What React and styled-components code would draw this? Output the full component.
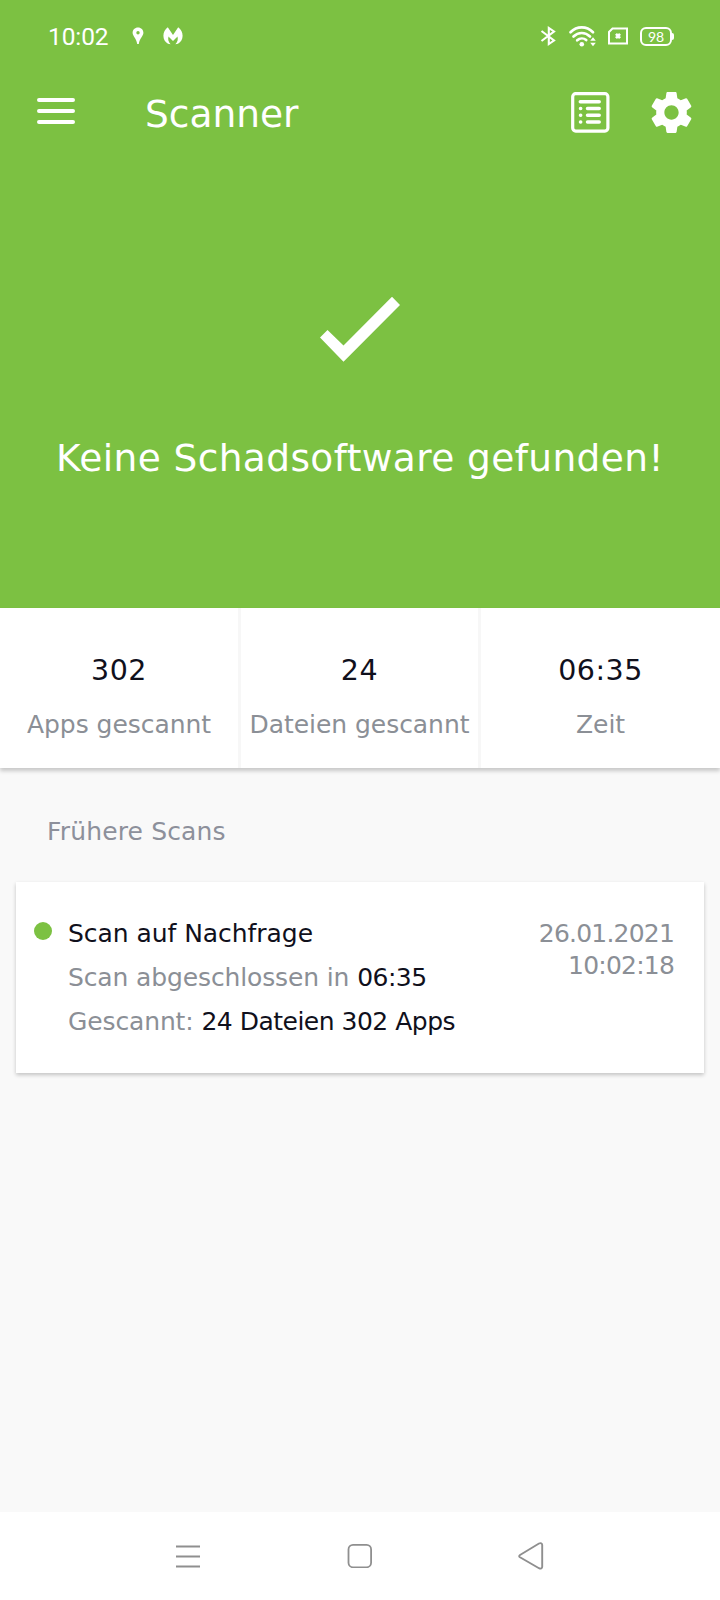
import React from "react";
import styled, { createGlobalStyle } from "styled-components";

const GlobalStyle = createGlobalStyle`
  * { box-sizing: border-box; }
  body { margin: 0; background: #f9f9f9; }
  svg { display: block; flex: none; }
`;

const Screen = styled.div`
  display: flex;
  flex-direction: column;
  width: 720px;
  height: 1600px;
  background: #f9f9f9;
  font-family: "DejaVu Sans", "Noto Sans", sans-serif;
  color: #10101c;
  white-space: nowrap;
`;

const Hero = styled.header`
  height: 608px;
  background: #7cc142;
  color: #fff;
`;

const StatusBar = styled.div`
  display: flex;
  align-items: center;
  height: 72px;
  padding: 0 46px 0 48px;
`;

const Clock = styled.time`
  width: 84px;
  padding-top: 1px;
  font-family: Roboto, sans-serif;
  font-size: 24.5px;
  line-height: 30px;
  letter-spacing: -0.1px;
`;

const StatusIcons = styled.div`
  display: flex;
  align-items: center;
  gap: ${(p) => p.$gap}px;
  margin-left: ${(p) => (p.$end ? "auto" : 0)};
`;

const AppBar = styled.div`
  display: flex;
  align-items: center;
  height: 80px;
  padding: 0 24px 0 36px;
`;

const Title = styled.h1`
  margin: 3px auto 0 69px;
  font-size: 37.5px;
  line-height: 52px;
  font-weight: 400;
`;

const Actions = styled.div`
  display: flex;
  align-items: center;
  gap: 37px;
`;

const Result = styled.div`
  display: flex;
  flex-direction: column;
  align-items: center;
  gap: 66px;
  padding-top: 144px;
`;

const Message = styled.p`
  margin: 0;
  font-size: 37.5px;
  line-height: 60px;
  letter-spacing: 0.4px;
`;

const Stats = styled.section`
  display: grid;
  grid-template-columns: 241px 240px 239px;
  height: 160px;
  background: #fff;
  box-shadow: 0 3px 4px rgba(0, 0, 0, 0.2);
`;

const Stat = styled.div`
  display: flex;
  flex-direction: column;
  align-items: center;
  gap: 18px;
  padding-top: 45px;
  border-right: ${(p) => (p.$last ? "none" : "3px solid #f7f7f7")};
`;

const StatValue = styled.strong`
  font-size: 28.5px;
  line-height: 36px;
  font-weight: 400;
  letter-spacing: 0.5px;
`;

const StatLabel = styled.span`
  font-size: 25px;
  line-height: 36px;
  letter-spacing: -0.05px;
  color: #8b8f96;
`;

const SectionTitle = styled.h2`
  margin: 46px 0 0 47px;
  font-size: 25px;
  line-height: 36px;
  font-weight: 400;
  letter-spacing: 0.15px;
  color: #8d909b;
`;

const ScanCard = styled.article`
  display: flex;
  align-items: flex-start;
  height: 191px;
  margin: 32px 16px 0;
  padding: 29px 30px 0 18px;
  background: #fff;
  box-shadow: 0 2px 4px rgba(0, 0, 0, 0.22);
`;

const Dot = styled.span`
  width: 18px;
  height: 18px;
  margin: 11px 16px 0 0;
  border-radius: 50%;
  background: #7cc142;
`;

const Details = styled.div`
  flex: 1;
  padding-top: 1px;
  font-size: 25px;
  line-height: 44px;
`;

const Line = styled.div`
  color: ${(p) => (p.$strong ? "#10101c" : "#8b8f96")};
  letter-spacing: ${(p) => (p.$strong ? -0.05 : -0.13)}px;
`;

const Value = styled.span`
  color: #10101c;
  letter-spacing: -0.5px;
`;

const Stamp = styled.div`
  padding-top: 7px;
  font-size: 25px;
  line-height: 32px;
  letter-spacing: -0.8px;
  text-align: right;
  color: #8b8f96;
`;

const NavBar = styled.nav`
  display: flex;
  align-items: center;
  justify-content: space-between;
  height: 88px;
  margin-top: auto;
  padding: 0 176px;
  background: #fff;
`;

const PinIcon = () => (
  <svg width="12" height="18" viewBox="0 0 12 18" fill="#fff">
    <path fillRule="evenodd" d="M6 0.4C2.800.4.6 2.800.6 5.800c0 3.200 3.800 5.400 4.600 11.300h1.600C7.600 11.200 11.400 9 11.400 5.800 11.400 2.800 9.200.4 6 .4zM6 4a1.700 1.700 0 1 1 0 3.400A1.700 1.700 0 0 1 6 4z" />
  </svg>
);

const MIcon = () => (
  <svg width="20" height="18" viewBox="0 0 20 18" fill="#fff">
    <path d="M4.800.3 10 8 15.200.3C18 2.300 19.600 5.300 19.600 8.700c0 3.500-1.700 6.300-4.600 8.100l-2.600.4C14.500 15.400 15.300 12.500 14.500 9.600L10 14 5.500 9.600C4.700 12.500 5.500 15.400 7.600 17.200l-2.600-.4C2.100 15 .4 12.200.4 8.700.4 5.300 2 2.300 4.800.3z" />
  </svg>
);

const BluetoothIcon = () => (
  <svg width="16" height="20" viewBox="0 0 16 20" fill="none" stroke="#fff" strokeWidth="2.100">
    <path d="M1.500 5 14 14.500 8.800 18V2l5.200 3.500L1.500 15" />
  </svg>
);

const WifiIcon = () => (
  <svg width="28" height="21" viewBox="-1 0 28 21" fill="none" stroke="#fff">
    <g strokeWidth="2.700" strokeLinecap="round">
      <path d="M1.500 6.300C8-.2 17.500-.2 24 6.300" />
      <path d="M4.500 10.500c4.800-4.700 11.700-4.700 16.500 0" />
      <path d="M8.200 14.300c2.600-2.300 6.500-2.400 9-.2" />
    </g>
    <circle cx="12.800" cy="18.300" r="2.300" fill="#fff" stroke="none" />
    <path d="m21.200 14.800 2.800-3.600 2.800 3.600zM21.200 16.700l2.800 3.600 2.800-3.600z" fill="#fff" stroke="none" />
  </svg>
);

const SimIcon = () => (
  <svg width="20" height="18" viewBox="0 0 20 18" fill="none" stroke="#fff" strokeWidth="2">
    <path d="M4.500 1.500H19v15H1V5z" />
    <path d="m8 6.800 4 4.400M12 6.800l-4 4.400" strokeWidth="2.600" />
  </svg>
);

const Battery = styled.div`
  display: flex;
  align-items: center;
`;

const BatteryBody = styled.span`
  width: 32px;
  height: 19px;
  border: 2px solid #fff;
  border-radius: 6px;
  font: 400 14px/15px Lato, sans-serif;
  text-align: center;
`;

const BatteryTip = styled.span`
  width: 2px;
  height: 7px;
  border-radius: 0 2px 2px 0;
  background: #fff;
`;

const MenuIcon = () => (
  <svg width="40" height="28" viewBox="0 0 40 28" stroke="#fff" strokeWidth="4" strokeLinecap="round">
    <path d="M3 2h34M3 13h34M3 24h34" />
  </svg>
);

const ReportIcon = () => (
  <svg width="39" height="41" viewBox="0 0 39 41" fill="none" stroke="#fff">
    <rect x="1.700" y="1.700" width="35.200" height="37.400" rx="3" strokeWidth="3.200" />
    <path d="M9.300 9.700H28.200M16.500 16.400H28.200M16.500 23.300H28.200M16.500 30H28.200" strokeWidth="3.500" strokeLinecap="round" />
    <path d="M9.500 16.400h.2M9.500 23.300h.2M9.500 30h.2" strokeWidth="3.500" strokeLinecap="round" />
  </svg>
);

const GearIcon = () => (
  <svg width="49" height="49" viewBox="0 0 24 24" fill="#fff">
    <path d="M19.430 12.980c.04-.32.07-.64.07-.98s-.03-.66-.07-.98l2.110-1.650c.19-.15.24-.42.12-.64l-2-3.460c-.12-.22-.39-.3-.61-.22l-2.490 1c-.52-.4-1.080-.73-1.690-.98l-.38-2.650C14.460 2.180 14.250 2 14 2h-4c-.25 0-.46.18-.49.42l-.38 2.650c-.61.25-1.170.59-1.690.98l-2.490-1c-.23-.09-.49 0-.61.22l-2 3.460c-.13.22-.07.49.12.64l2.110 1.650c-.04.32-.07.65-.07.98s.03.66.07.98l-2.110 1.650c-.19.15-.24.42-.12.64l2 3.460c.12.22.39.3.61.22l2.490-1c.52.4 1.080.73 1.690.98l.38 2.650c.03.24.24.42.49.42h4c.25 0 .46-.18.49-.42l.38-2.650c.61-.25 1.170-.59 1.690-.98l2.490 1c.23.09.49 0 .61-.22l2-3.460c.12-.22.07-.49-.12-.64l-2.110-1.650zM12 15.500c-1.930 0-3.500-1.570-3.500-3.500s1.570-3.500 3.500-3.500 3.500 1.570 3.500 3.500-1.570 3.500-3.500 3.500z" />
  </svg>
);

const CheckIcon = () => (
  <svg width="80" height="66" viewBox="0 0 80 66" fill="#fff">
    <path d="M0 41.500 7.500 34 23.500 49.500 72 .8 80 9 23.500 65.700z" />
  </svg>
);

const RecentsIcon = () => (
  <svg width="24" height="24" viewBox="0 0 24 24" stroke="#8f8f8f" strokeWidth="2">
    <path d="M0 2.500h24M0 12.500h24M0 22.500h24" />
  </svg>
);

const HomeIcon = () => (
  <svg width="26" height="24" viewBox="0 0 26 24" fill="none" stroke="#8f8f8f" strokeWidth="1.800">
    <rect x="2.500" y="0.900" width="22.600" height="22.400" rx="4.500" />
  </svg>
);

const BackIcon = () => (
  <svg width="26" height="28" viewBox="0 0 26 28" fill="none" stroke="#8f8f8f" strokeWidth="1.900" strokeLinejoin="round">
    <path d="M2 13 C.9 13.700.9 14.600 2 15.300L21 26.200c1.700.9 3.200.2 3.200-1.500V3c0-1.700-1.500-2.400-3.200-1.500z" />
  </svg>
);

const stats = [
  { value: "302", label: "Apps gescannt" },
  { value: "24", label: "Dateien gescannt" },
  { value: "06:35", label: "Zeit" },
];

export default function App() {
  return (
    <Screen>
      <GlobalStyle />
      <Hero>
        <StatusBar>
          <Clock>10:02</Clock>
          <StatusIcons $gap={19}>
            <PinIcon />
            <MIcon />
          </StatusIcons>
          <StatusIcons $gap={12} $end>
            <BluetoothIcon />
            <WifiIcon />
            <SimIcon />
            <Battery>
              <BatteryBody>98</BatteryBody>
              <BatteryTip />
            </Battery>
          </StatusIcons>
        </StatusBar>
        <AppBar>
          <MenuIcon />
          <Title>Scanner</Title>
          <Actions>
            <ReportIcon />
            <GearIcon />
          </Actions>
        </AppBar>
        <Result>
          <CheckIcon />
          <Message>Keine Schadsoftware gefunden!</Message>
        </Result>
      </Hero>
      <Stats>
        {stats.map((s, i) => (
          <Stat key={s.label} $last={i === stats.length - 1}>
            <StatValue>{s.value}</StatValue>
            <StatLabel>{s.label}</StatLabel>
          </Stat>
        ))}
      </Stats>
      <SectionTitle>Frühere Scans</SectionTitle>
      <ScanCard>
        <Dot />
        <Details>
          <Line $strong>Scan auf Nachfrage</Line>
          <Line>
            Scan abgeschlossen in <Value>06:35</Value>
          </Line>
          <Line>
            Gescannt: <Value>24 Dateien 302 Apps</Value>
          </Line>
        </Details>
        <Stamp>
          26.01.2021
          <br />
          10:02:18
        </Stamp>
      </ScanCard>
      <NavBar>
        <RecentsIcon />
        <HomeIcon />
        <BackIcon />
      </NavBar>
    </Screen>
  );
}
